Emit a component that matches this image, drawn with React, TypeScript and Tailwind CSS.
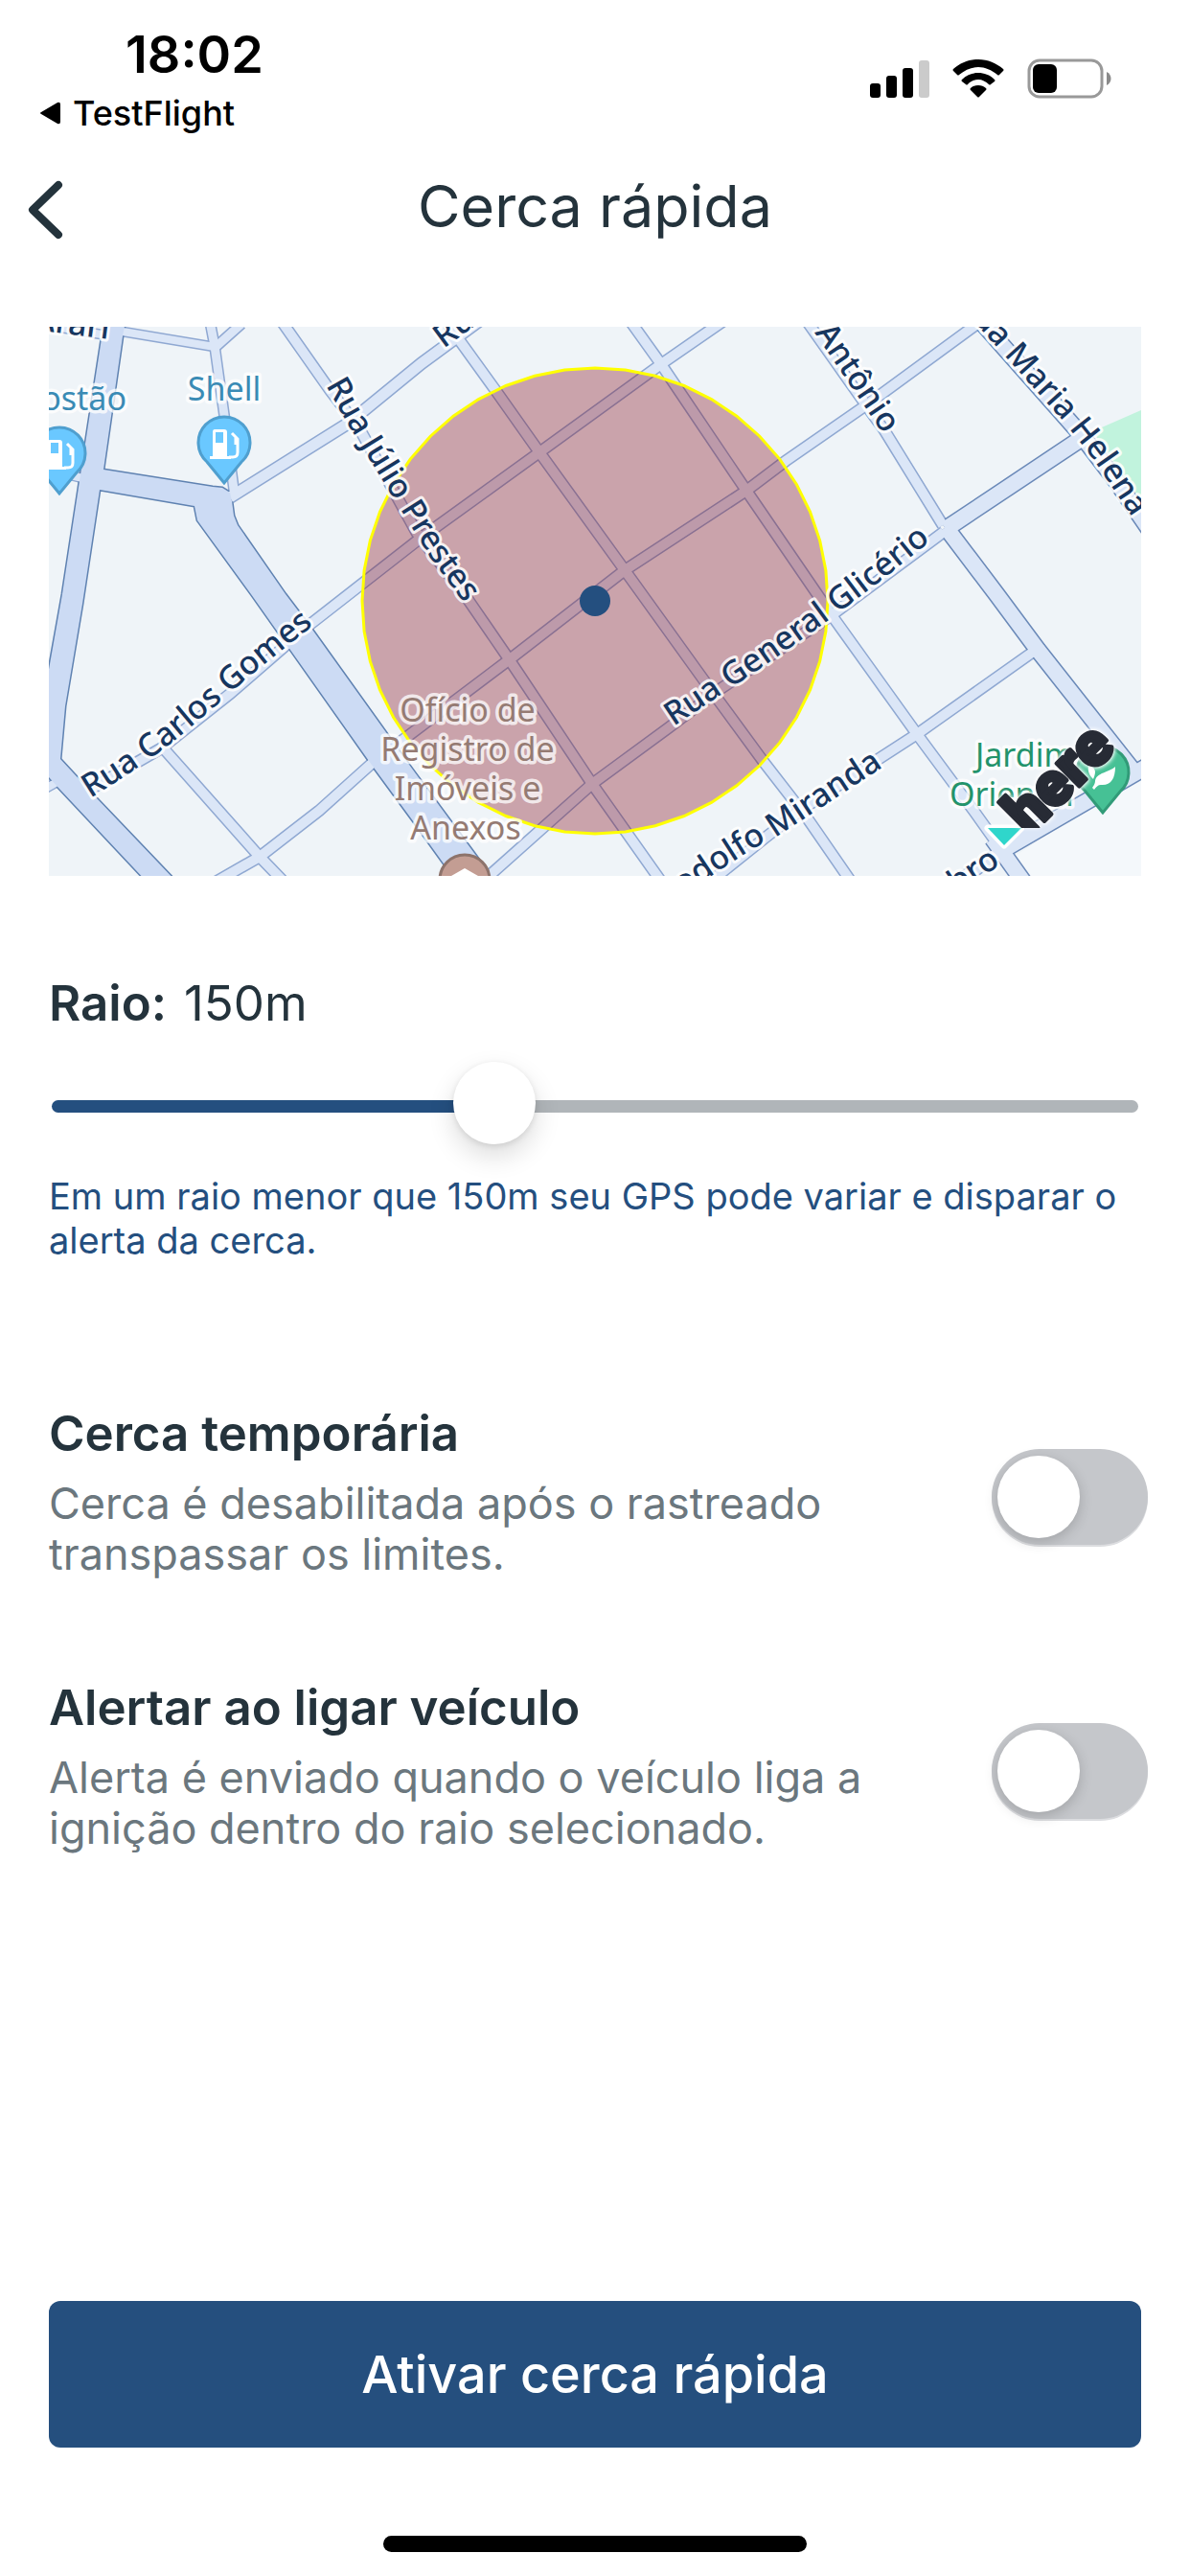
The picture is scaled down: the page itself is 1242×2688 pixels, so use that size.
import { useState } from "react";

const MINOR_ROADS: { d: string; w: number }[] = [
  { d: "M40,338 L112,350", w: 9 },
  { d: "M122,345 L224,362", w: 9 },
  { d: "M219,335 L224,361 L234,433 L245,518", w: 10 },
  { d: "M224,363 L252,338", w: 10 },
  { d: "M70,495 L90,500", w: 9 },
  { d: "M293,334 L345,408 L375,447 L435,556 L488,625 L532,689 L618,818 L693,924", w: 11 },
  { d: "M755,335 L690,380 L563,472 L437,563 L323,652 L240,724 L168,781 L90,826", w: 11 },
  { d: "M40,827 L72,809", w: 9 },
  { d: "M240,519 L363,442 L440,379 L500,335", w: 12 },
  { d: "M465,335 L517,407 L563,472 L652,595 L742,720 L797,795 L842,853 L891,924", w: 11 },
  { d: "M657,334 L690,380 L779,512 L868,642 L957,766 L1017,847 L1042,882", w: 11 },
  { d: "M410,780 L532,688 L652,595 L779,512 L820,481 L908,420 L1024,335", w: 11 },
  { d: "M392,793 L333,846 L271,894 L222,922", w: 11 },
  { d: "M498,925 L618,818 L697,760 L750,720 L868,642 L985,555", w: 11 },
  { d: "M735,925 L800,873 L836,845 L920,790 L957,766 L1077,681", w: 11 },
  { d: "M842,335 L907,427 L923,449 L984,548", w: 11 },
  { d: "M168,778 L271,894 L298,922", w: 11 },
  { d: "M1048,886 L1000,920", w: 13 },
];

const MEDIUM_ROADS: { d: string; w: number }[] = [
  { d: "M987,552 L1125,460", w: 17 },
  { d: "M987,550 L1040,620 L1083,678 L1184,806", w: 17 },
  { d: "M1200,798 L1043,889", w: 17 },
  { d: "M1036,875 L1071,924", w: 17 },
  { d: "M1020,331 L1127,452 L1165,502 L1200,553", w: 17 },
];

const AVENUE =
  "M131,335 L128,351 L108,490 L222,508 L232,509 L240,514 L242,523 L244,538 L248,548 L298,620 L326,657 L430,802 L497,893 L518,922 L478,922 L432,858 L385,794 L262,620 L206,543 L203,528 L104,511 L86,630 L68,737 L63,792 L100,832 L186,922 L155,922 L61,822 L40,799 L40,760 L65,620 L83,502 L106,353 L109,335 Z";

const STREET_LABELS: { id: string; d: string; text: string; end?: boolean }[] = [
  { id: "arari", d: "M20,342 L113,354", text: "Arari", end: true },
  { id: "carlos", d: "M94,833 Q150,799 189,767 Q238,726 260,706 L340,642", text: "Rua Carlos Gomes" },
  { id: "julio", d: "M340,402 L365,446 L420,535 L450,583 L500,650", text: "Rua Júlio Prestes" },
  { id: "rua", d: "M463,364 L540,307", text: "Rua" },
  { id: "glicerio", d: "M703,758 L800,693 Q900,624 980,557", text: "Rua General Glicério" },
  { id: "miranda", d: "M650,976 L750,909 Q790,882 820,867 L922,800", text: "Rodolfo Miranda", end: true },
  { id: "antonio", d: "M850,347 L940,480", text: "Antônio" },
  { id: "helena", d: "M1000,317 L1110,440 Q1140,476 1155,500 L1230,612", text: "Rua Maria Helena" },
  { id: "outubro", d: "M932,978 L1045,902", text: "Outubro", end: true },
];

const CENTER = { x: 621, y: 627, r: 243 };

const FENCE = Array.from({ length: 48 }, (_, i) => {
  const a = (i / 48) * Math.PI * 2;
  return `${(CENTER.x + CENTER.r * Math.sin(a)).toFixed(1)},${(CENTER.y - CENTER.r * Math.cos(a)).toFixed(1)}`;
}).join(" ");

const PIN = "M0,43 L-18,21 A27,27 0 1 1 18,21 Z";

function FuelPin({ x, y }: { x: number; y: number }) {
  return (
    <g transform={`translate(${x} ${y})`}>
      <path d={PIN} fill="#6ac8ff" stroke="#4f9fcf" strokeWidth="3" />
      <path
        fillRule="evenodd"
        fill="#fff"
        d="M-10,-13 H0 Q3,-13 3,-10 V15 H7 V18 H-15 V15 H-12 V-10 Q-12,-13 -10,-13 Z M-9,-10 V1 H-1 V-10 Z"
      />
      <path d="M5,16 H9 Q14,16 14,11 V-3 L8,-9 M12,-5 V3" fill="none" stroke="#fff" strokeWidth="3" />
    </g>
  );
}

function FenceMap() {
  return (
    <svg viewBox="51 341 1140 573" className="block h-auto w-full" role="img" aria-label="Mapa da cerca">
      <rect x="51" y="341" width="1140" height="573" fill="#eff4f8" />
      <path d="M1200,802 L1058,894 L1080,924 L1200,924 Z" fill="#f4f8fb" />
      <path d="M1200,424 L1143,449 L1150,478 L1200,545 Z" fill="#c1f3dd" />
      <g fill="none">
        {MINOR_ROADS.map((r) => (
          <path key={r.d} d={r.d} stroke="#8fa8d2" strokeWidth={r.w + 2} />
        ))}
        {MEDIUM_ROADS.map((r) => (
          <path key={r.d} d={r.d} stroke="#6a89b8" strokeWidth={r.w + 2} />
        ))}
        <path d={AVENUE} stroke="#5f82b1" strokeWidth="3" />
        {MINOR_ROADS.map((r) => (
          <path key={r.d} d={r.d} stroke="#dbe6f7" strokeWidth={r.w - 1} />
        ))}
        {MEDIUM_ROADS.map((r) => (
          <path key={r.d} d={r.d} stroke="#dbe6f7" strokeWidth={r.w - 1} />
        ))}
      </g>
      <path d={AVENUE} fill="#ccdbf4" />
      <polygon points={FENCE} fill="#7f000f" fillOpacity="0.33" stroke="#ffff00" strokeWidth="3" />

      <g
        fontFamily="'Noto Sans', sans-serif"
        fontSize="34"
        fontWeight="500"
        fill="#17365f"
        stroke="#ffffff"
        strokeOpacity="0.85"
        strokeWidth="6"
        strokeLinejoin="round"
        paintOrder="stroke"
      >
        {STREET_LABELS.map((l) => (
          <g key={l.id}>
            <path id={l.id} d={l.d} fill="none" stroke="none" />
            <text textAnchor={l.end ? "end" : "start"}>
              <textPath href={`#${l.id}`} startOffset={l.end ? "100%" : "0%"}>
                {l.text}
              </textPath>
            </text>
          </g>
        ))}
      </g>

      <g
        fontFamily="'Noto Sans', sans-serif"
        fontSize="34"
        stroke="#ffffff"
        strokeOpacity="0.75"
        strokeWidth="7"
        strokeLinejoin="round"
        paintOrder="stroke"
      >
        <text x="234" y="418" textAnchor="middle" fill="#3a8bb5">Shell</text>
        <text x="132" y="428" textAnchor="end" fill="#3a8bb5">Postão</text>
        <g fill="#957b73" textAnchor="middle">
          <text x="488" y="753">Ofício de</text>
          <text x="488" y="794">Registro de</text>
          <text x="488" y="835">Imóveis e</text>
          <text x="486" y="876">Anexos</text>
        </g>
        <g fill="#23936b">
          <text x="1018" y="800">Jardim</text>
          <text x="991" y="841">Oriental</text>
        </g>
      </g>

      <FuelPin x={62} y={472} />
      <FuelPin x={234} y={461} />
      <g transform="translate(485 918)">
        <circle r="26" fill="#c39d93" stroke="#8d736b" strokeWidth="3" />
        <path d="M-14,-4 L0,-12 L14,-4 V6 H-14 Z" fill="#fff" />
      </g>
      <g transform="translate(1151 805)">
        <path d={PIN} fill="#46c195" stroke="#319b78" strokeWidth="3" />
        <path
          fill="#fff"
          d="M13,-5 C13,8 8,15 -2,14 C-5,14 -7,16 -9,19 L-11,17 C-9,14 -8,12 -8,10 C-7,1 7,1 13,-5 Z M-15,-6 C-8,-4 -6,-1 -10,8 C-14,4 -16,0 -15,-6 Z"
        />
      </g>

      <clipPath id="logo-clip">
        <rect x="1000" y="720" width="191" height="144" />
      </clipPath>
      <path d="M1031,864 H1066 L1048,882 Z" fill="#2fd6cb" stroke="#fff" strokeWidth="7" strokeLinejoin="round" paintOrder="stroke" />
      <g className="drop-shadow-[0_0_2px_#ffffff]">
        <g clipPath="url(#logo-clip)" className="drop-shadow-[0_0_2px_#ffffff]">
          <text
            transform="translate(1074 873) rotate(-45)"
            fontFamily="Roboto, sans-serif"
            fontWeight="900"
            fontSize="64"
            fill="#272b35"
            stroke="#272b35"
            strokeWidth="4"
            strokeLinejoin="round"
          >
            here
          </text>
        </g>
      </g>
      <circle cx={CENTER.x} cy={CENTER.y} r="16" fill="#244f7f" />
    </svg>
  );
}

function StatusBar() {
  return (
    <div className="flex items-start justify-between pl-10 pr-[82px] pt-[27px] text-black">
      <div>
        <div className="pl-[91px] text-[54px] font-semibold leading-[60px]">18:02</div>
        <a href="#testflight" className="mt-[11px] flex items-center gap-3 text-[36px] font-medium leading-10">
          <svg viewBox="0 0 24 24" className="size-6" aria-hidden="true">
            <path d="M3,11 L20,1 Q23,0 23,3 V21 Q23,24 20,23 L3,13 Q1,12 3,11 Z" fill="currentColor" />
          </svg>
          TestFlight
        </a>
      </div>
      <div className="mt-[34px] flex items-center gap-6">
        <svg viewBox="0 0 62 42" className="h-[42px] w-[62px]" aria-hidden="true">
          <rect x="0" y="26" width="11" height="15" rx="3" />
          <rect x="17" y="18" width="11" height="23" rx="3" />
          <rect x="34" y="10" width="11" height="31" rx="3" />
          <rect x="51" y="2" width="11" height="39" rx="3" fill="#cbcbcb" />
        </svg>
        <svg viewBox="0 0 54 42" className="h-[42px] w-[54px]" aria-hidden="true">
          <path d="M27,1 C37,1 46,5 53,11 Q54,12 53,13 L49,17 Q48,18 47,17 C41,12 34,9 27,9 C20,9 13,12 7,17 Q6,18 5,17 L1,13 Q0,12 1,11 C8,5 17,1 27,1 Z" />
          <path d="M27,15 C33,15 39,17 44,22 Q45,23 44,24 L40,27 Q39,28 38,27 C35,24 31,22 27,22 C23,22 19,24 16,27 Q15,28 14,27 L10,24 Q9,23 10,22 C15,17 21,15 27,15 Z" />
          <path d="M27,28 C30,28 33,29 35,31 Q36,32 35,33 L28,40 Q27,41 26,40 L19,33 Q18,32 19,31 C21,29 24,28 27,28 Z" />
        </svg>
        <svg viewBox="0 0 88 42" className="h-[42px] w-[88px]" aria-hidden="true">
          <rect x="2" y="2" width="76" height="38" rx="11" fill="none" stroke="#999" strokeWidth="3" />
          <rect x="6" y="6" width="25" height="30" rx="6" />
          <path d="M83,14 C89,17 89,25 83,28 Z" fill="#8a8a8a" />
        </svg>
      </div>
    </div>
  );
}

function ToggleRow({ id, title, text }: { id: string; title: string; text: string }) {
  return (
    <div className="flex items-start justify-between pl-[51px] pr-11">
      <label htmlFor={id} className="w-[880px] max-w-full">
        <span className="block text-[51px] font-semibold leading-[60px] text-[#24333c]">{title}</span>
        <span className="mt-4 block text-[45px] leading-[53px] text-[#6b777e]">{text}</span>
      </label>
      <input
        id={id}
        type="checkbox"
        role="switch"
        className="mt-[46px] h-[100px] w-[163px] shrink-0 appearance-none rounded-full bg-[#c5c7cb] shadow-[0_2px_0_#dcdde0] before:ml-1.5 before:mt-[7px] before:block before:size-[86px] before:rounded-full before:bg-white before:shadow-[0_4px_14px_rgba(0,0,0,0.18)] before:content-[''] checked:bg-[#244f7f] checked:before:ml-[71px]"
      />
    </div>
  );
}

export default function App() {
  const [radius, setRadius] = useState(150);
  const filled = ((radius - 50) / 250) * 100;

  return (
    <div className="flex min-h-screen flex-col bg-white font-['Inter',sans-serif] text-[#24333c]">
      <StatusBar />
      <header className="mt-[37px] grid grid-cols-[1fr_auto_1fr] items-center px-[26px]">
        <button type="button" aria-label="Voltar" className="w-12">
          <svg viewBox="0 0 48 72" className="h-[72px] w-12" fill="none" stroke="currentColor" strokeWidth="8" strokeLinecap="round" strokeLinejoin="round">
            <path d="M35,14 L8,40 L35,66" />
          </svg>
        </button>
        <h1 className="text-[61px] leading-20">Cerca rápida</h1>
      </header>

      <main className="mt-[86px]">
        <section className="px-[51px]">
          <FenceMap />
          <label htmlFor="radius" className="mt-[103px] flex gap-[18px] text-[51px] leading-[60px]">
            <span className="font-semibold">Raio:</span>
            <span>{radius}m</span>
          </label>
          <div className="mt-[34px] px-[3px]">
            <input
              id="radius"
              type="range"
              min={50}
              max={300}
              value={radius}
              onChange={(e) => setRadius(Number(e.target.value))}
              style={{ "--track": `linear-gradient(to right, #244f7f ${filled}%, #b0b5b9 ${filled}%)` } as React.CSSProperties}
              className="block h-[87px] w-full appearance-none bg-transparent [&::-webkit-slider-runnable-track]:h-[13px] [&::-webkit-slider-runnable-track]:rounded-full [&::-webkit-slider-runnable-track]:bg-(image:--track) [&::-webkit-slider-thumb]:-mt-10 [&::-webkit-slider-thumb]:size-[86px] [&::-webkit-slider-thumb]:appearance-none [&::-webkit-slider-thumb]:rounded-full [&::-webkit-slider-thumb]:bg-white [&::-webkit-slider-thumb]:shadow-[0_12px_28px_rgba(0,0,0,0.14),0_2px_6px_rgba(0,0,0,0.1)]"
            />
          </div>
          <p className="mt-[27px] text-[38px] leading-[46px] text-[#244f7f]">
            Em um raio menor que 150m seu GPS pode variar e disparar o alerta da cerca.
          </p>
        </section>
        <div className="mt-[149px] flex flex-col gap-[104px]">
          <ToggleRow id="temporary" title="Cerca temporária" text="Cerca é desabilitada após o rastreado transpassar os limites." />
          <ToggleRow id="ignition" title="Alertar ao ligar veículo" text="Alerta é enviado quando o veículo liga a ignição dentro do raio selecionado." />
        </div>
      </main>

      <footer className="mt-auto flex flex-col items-center px-[51px] pb-[25px] pt-20">
        <button type="button" className="h-[153px] w-full rounded-xl bg-[#254f7e] text-[54px] font-medium text-white">
          Ativar cerca rápida
        </button>
        <div className="mt-[92px] h-[17px] w-[442px] rounded-full bg-black" />
      </footer>
    </div>
  );
}
